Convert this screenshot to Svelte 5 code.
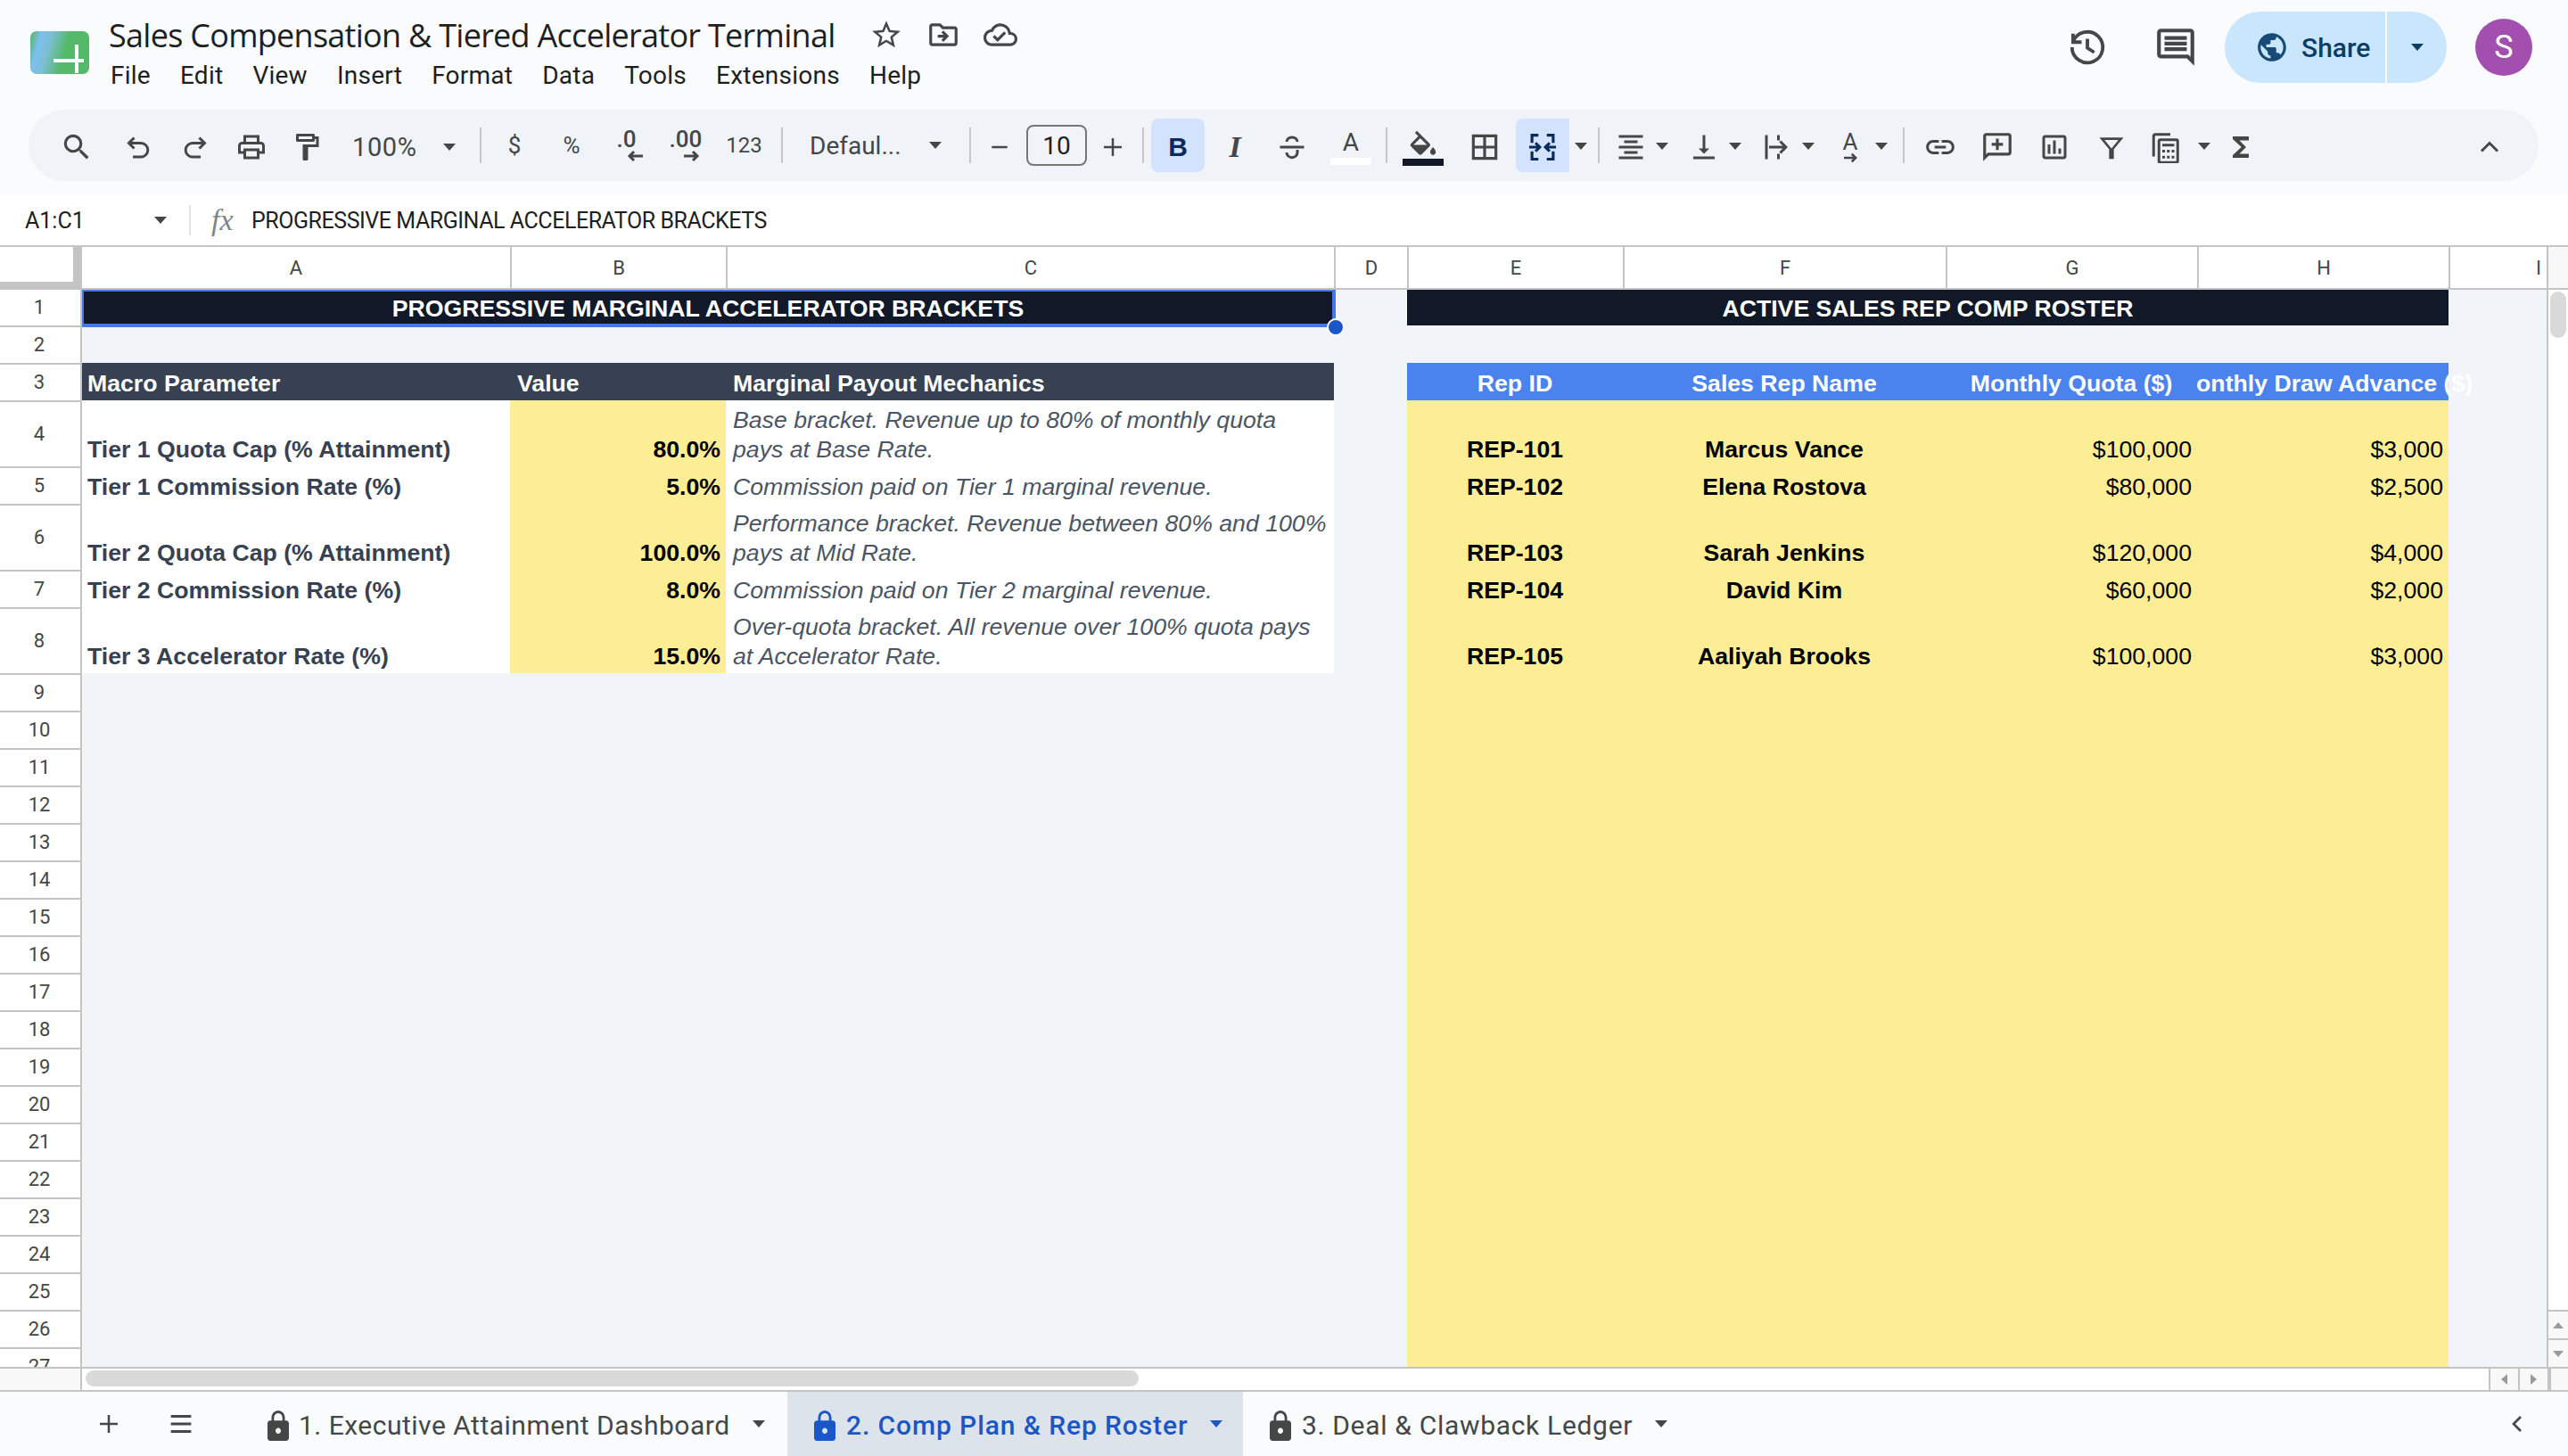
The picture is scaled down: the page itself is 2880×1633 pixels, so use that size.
<script>
  const paths = {
    search: "M15.5 14h-.79l-.28-.27A6.471 6.471 0 0 0 16 9.5 6.5 6.5 0 1 0 9.5 16c1.61 0 3.09-.59 4.23-1.57l.27.28v.79l5 4.99L20.49 19l-4.99-5zm-6 0C7.01 14 5 11.99 5 9.5S7.01 5 9.5 5 14 7.01 14 9.5 11.99 14 9.5 14z",
    print: "M19 8h-1V3H6v5H5c-1.66 0-3 1.34-3 3v6h4v4h12v-4h4v-6c0-1.66-1.34-3-3-3zM8 5h8v3H8V5zm8 14H8v-4h8v4zm2-4v-2H6v2H4v-4c0-.55.45-1 1-1h14c.55 0 1 .45 1 1v4h-2z",
    paint: "M18 4V3c0-.55-.45-1-1-1H5c-.55 0-1 .45-1 1v4c0 .55.45 1 1 1h12c.55 0 1-.45 1-1V6h1v4H9v11c0 .55.45 1 1 1h2c.55 0 1-.45 1-1v-9h8V4h-3zm-2 2H6V4h10v2z",
    fill: "M16.56 8.94L7.62 0 6.21 1.41l2.38 2.38-5.15 5.15c-.59.59-.59 1.54 0 2.12l5.5 5.5c.29.29.68.44 1.06.44s.77-.15 1.06-.44l5.5-5.5c.59-.58.59-1.53 0-2.12zM5.21 10L10 5.21 14.79 10H5.21zM19 11.5s-2 2.17-2 3.5c0 1.1.9 2 2 2s2-.9 2-2c0-1.33-2-3.5-2-3.5z",
    borders: "M3 3v18h18V3H3zm8 16H5v-6h6v6zm0-8H5V5h6v6zm8 8h-6v-6h6v6zm0-8h-6V5h6v6z",
    align: "M3 3h18v2H3zM7 7h10v2H7zM3 11h18v2H3zM7 15h10v2H7zM3 19h18v2H3z",
    valign: "M16 13h-3V3h-2v10H8l4 4 4-4zM4 19v2h16v-2H4z",
    wrap: "M3 3h2v18H3zM12 3h2v4h-2zM12 17h2v4h-2zM6 11h10.2l-2.6-2.6L15 7l5 5-5 5-1.4-1.4 2.6-2.6H6z",
    link: "M3.9 12c0-1.71 1.39-3.1 3.1-3.1h4V7H7c-2.76 0-5 2.24-5 5s2.24 5 5 5h4v-1.9H7c-1.71 0-3.1-1.39-3.1-3.1zM8 13h8v-2H8v2zm9-6h-4v1.9h4c1.71 0 3.1 1.39 3.1 3.1s-1.39 3.1-3.1 3.1h-4V17h4c2.76 0 5-2.24 5-5s-2.24-5-5-5z",
    addComment: "M20 2H4c-1.1 0-2 .9-2 2v18l4-4h14c1.1 0 2-.9 2-2V4c0-1.1-.9-2-2-2zm0 14H5.17L4 17.17V4h16v12zM13 6h-2v3H8v2h3v3h2v-3h3V9h-3z",
    chart: "M19 3H5c-1.1 0-2 .9-2 2v14c0 1.1.9 2 2 2h14c1.1 0 2-.9 2-2V5c0-1.1-.9-2-2-2zm0 16H5V5h14v14zM7 10h2v7H7zM11 7h2v10h-2zM15 13h2v4h-2z",
    sigma: "M18 4H6v2l6.5 6L6 18v2h12v-3h-7l5-5-5-5h7z",
    comment: "M21.99 4c0-1.1-.89-2-1.99-2H4c-1.1 0-2 .9-2 2v12c0 1.1.9 2 2 2h14l4 4-.01-18zM20 4v13.17L18.83 16H4V4h16zM6 12h12v2H6zm0-3h12v2H6zm0-3h12v2H6z",
    globe: "M12 2C6.48 2 2 6.48 2 12s4.48 10 10 10 10-4.48 10-10S17.52 2 12 2zm-1 17.93c-3.95-.49-7-3.85-7-7.93 0-.62.08-1.21.21-1.79L9 15v1c0 1.1.9 2 2 2v1.93zm6.9-2.54c-.26-.81-1-1.39-1.9-1.39h-1v-3c0-.55-.45-1-1-1H8v-2h2c.55 0 1-.45 1-1V7h2c1.1 0 2-.9 2-2v-.41c2.93 1.19 5 4.06 5 7.41 0 2.08-.8 3.97-2.1 5.39z",
    star: "M22 9.24l-7.19-.62L12 2 9.19 8.63 2 9.24l5.46 4.73L5.82 21 12 17.27 18.18 21l-1.63-7.03L22 9.24zM12 15.4l-3.76 2.27 1-4.28-3.32-2.88 4.38-.38L12 6.1l1.71 4.04 4.38.38-3.32 2.88 1 4.28L12 15.4z",
    folder: "M20 6h-8l-2-2H4c-1.1 0-2 .9-2 2v12c0 1.1.9 2 2 2h16c1.1 0 2-.9 2-2V8c0-1.1-.9-2-2-2zm0 12H4V6h5.17l2 2H20v10zM12.16 12H8v2h4.16l-1.59 1.59L12 17l4-4-4-4-1.41 1.41z",
    cloud: "M19.35 10.04A7.49 7.49 0 0 0 12 4C9.11 4 6.6 5.64 5.35 8.04A5.994 5.994 0 0 0 0 14c0 3.31 2.69 6 6 6h13c2.76 0 5-2.24 5-5 0-2.64-2.05-4.78-4.65-4.96zM19 18H6c-2.21 0-4-1.79-4-4 0-2.05 1.53-3.76 3.56-3.97l1.07-.11.5-.95A5.469 5.469 0 0 1 12 6c2.62 0 4.88 1.86 5.39 4.43l.3 1.5 1.53.11A2.98 2.98 0 0 1 22 15c0 1.65-1.35 3-3 3zm-9-3.82l-2.09-2.09L6.5 13.5 10 17l6.01-6.01-1.41-1.41z",
    lock: "M18 8h-1V6c0-2.76-2.24-5-5-5S7 3.24 7 6v2H6c-1.1 0-2 .9-2 2v10c0 1.1.9 2 2 2h12c1.1 0 2-.9 2-2V10c0-1.1-.9-2-2-2zm-6 9c-1.1 0-2-.9-2-2s.9-2 2-2 2 .9 2 2-.9 2-2 2zm3.1-9H8.9V6c0-1.71 1.39-3.1 3.1-3.1 1.71 0 3.1 1.39 3.1 3.1v2z"
  };

  // outline icons that read better as strokes
  const strokes = {
    undo: "M9 5L5 9l4 4M5 9h9a5.2 5.2 0 0 1 0 10.4H8",
    redo: "M15 5l4 4-4 4M19 9h-9a5.2 5.2 0 0 0 0 10.4h6",
    strike: "M3 12h18M16 8a4 3.4 0 0 0-8 0M8 16a4 3.8 0 0 0 8 0V14",
    merge: "M9 3.5H4.5V9M4.5 15v5.5H9M15 3.5h4.5V9M19.5 15v5.5H15M2.5 12h7M7 9l3 3-3 3M21.5 12h-7M17 9l-3 3 3 3",
    filter: "M4 5h16l-7 8.5V21h-2v-7.5z",
    calc: "M3.5 19V4A1.5 1.5 0 0 1 5 2.5h11M8.5 6.5h12a1 1 0 0 1 1 1v15a1 1 0 0 1-1 1h-12a1 1 0 0 1-1-1v-15a1 1 0 0 1 1-1zM10 10.5h9M10 15h2M13.5 15h2M17 15h2M10 19.5h2M13.5 19.5h2M17 19.5h2",
    history: "M3.6 4v5h5M3.6 8.8A9 9 0 1 1 3 12M12 7v5.4l4 2.6",
    up: "M6 15l6-6 6 6",
    left: "M15 6l-6 6 6 6",
    plus: "M12 4v16M4 12h16",
    minus: "M5 12h14",
    menu: "M4 6h16M4 12h16M4 18h16",
    arrowL: "M20 8H6M10 3L5 8l5 5",
    arrowR: "M2 8h14M12 3l5 5-5 5"
  };

  const columns = ["A", "B", "C", "D", "E", "F", "G", "H", "I"];

  const rowHeights = [40, 42, 42, 74, 42, 74, 42, 74, 42];
  for (let i = 10; i <= 27; i++) rowHeights.push(42);

  // rows 4-8 of both tables
  const params = [
    ["Tier 1 Quota Cap (% Attainment)", "80.0%", ["Base bracket. Revenue up to 80% of monthly quota", "pays at Base Rate."]],
    ["Tier 1 Commission Rate (%)", "5.0%", ["Commission paid on Tier 1 marginal revenue."]],
    ["Tier 2 Quota Cap (% Attainment)", "100.0%", ["Performance bracket. Revenue between 80% and 100%", "pays at Mid Rate."]],
    ["Tier 2 Commission Rate (%)", "8.0%", ["Commission paid on Tier 2 marginal revenue."]],
    ["Tier 3 Accelerator Rate (%)", "15.0%", ["Over-quota bracket. All revenue over 100% quota pays", "at Accelerator Rate."]]
  ];
  const reps = [
    ["REP-101", "Marcus Vance", "$100,000", "$3,000"],
    ["REP-102", "Elena Rostova", "$80,000", "$2,500"],
    ["REP-103", "Sarah Jenkins", "$120,000", "$4,000"],
    ["REP-104", "David Kim", "$60,000", "$2,000"],
    ["REP-105", "Aaliyah Brooks", "$100,000", "$3,000"]
  ];
  const menus = ["File", "Edit", "View", "Insert", "Format", "Data", "Tools", "Extensions", "Help"];
  const tabs = [
    { name: "1. Executive Attainment Dashboard", cls: "tab1" },
    { name: "2. Comp Plan & Rep Roster", cls: "tab2 active" },
    { name: "3. Deal & Clawback Ledger", cls: "tab3" }
  ];
  const emptyRows = Array.from({ length: 19 }, (_, i) => i + 9);
</script>

{#snippet icon(name, size = 40)}
  <svg class="ic" width={size} height={size} viewBox="0 0 24 24"><path d={paths[name]} /></svg>
{/snippet}

{#snippet line(name, size = 40)}
  <svg class="ln" width={size} height={size} viewBox="0 0 24 24"><path d={strokes[name]} /></svg>
{/snippet}

<div class="page">
  <header class="top">
    <svg class="logo" width="66" height="48" viewBox="0 0 66 48">
      <defs>
        <linearGradient id="lg" x1="0" x2="1" y1="0.2" y2="0.4">
          <stop offset="0" stop-color="#5ab878" />
          <stop offset="0.15" stop-color="#7dbff0" />
          <stop offset="0.32" stop-color="#7cbfd4" />
          <stop offset="0.62" stop-color="#55b96a" />
        </linearGradient>
      </defs>
      <rect width="66" height="48" rx="7" fill="url(#lg)" />
      <path d="M26 33h34M52 15v32" stroke="#fff" stroke-width="4" fill="none" />
    </svg>
    <div class="docinfo">
      <div class="titlerow">
        <span class="title">Sales Compensation &amp; Tiered Accelerator Terminal</span>
        <span class="titleicons">
          {@render icon("star", 38)}
          {@render icon("folder", 38)}
          {@render icon("cloud", 38)}
        </span>
      </div>
      <nav class="menus">
        {#each menus as m}<span>{m}</span>{/each}
      </nav>
    </div>
    <div class="actions">
      <span class="act">{@render line("history", 46)}</span>
      <span class="act">{@render icon("comment", 50)}</span>
      <div class="share">
        <span class="share-main">
          <svg class="globe" width="38" height="38" viewBox="0 0 24 24"><path d={paths.globe} /></svg>
          Share
        </span>
        <span class="share-more"><i class="caret navy"></i></span>
      </div>
      <span class="avatar">S</span>
    </div>
  </header>

  <div class="toolwrap">
    <div class="toolbar">
      <span class="tool search">{@render icon("search", 38)}</span>
      <span class="tool">{@render line("undo", 36)}</span>
      <span class="tool">{@render line("redo", 36)}</span>
      <span class="tool pt">{@render icon("print", 36)}</span>
      <span class="tool pt">{@render icon("paint", 36)}</span>
      <span class="zoomsel"><span>100%</span><i class="caret"></i></span>
      <i class="sep"></i>
      <span class="tool txt first">$</span>
      <span class="tool txt">%</span>
      <span class="tool dec">
        <span>.0</span>
        <svg width="22" height="16" viewBox="0 0 22 16"><path d={strokes.arrowL} /></svg>
      </span>
      <span class="tool dec">
        <span>.00</span>
        <svg width="22" height="16" viewBox="0 0 22 16"><path d={strokes.arrowR} /></svg>
      </span>
      <span class="tool txt small">123</span>
      <i class="sep s2"></i>
      <span class="fontsel"><span>Defaul...</span><i class="caret"></i></span>
      <i class="sep"></i>
      <span class="tool minus">{@render line("minus", 30)}</span>
      <span class="sizebox">10</span>
      <span class="tool plus">{@render line("plus", 30)}</span>
      <i class="sep s3"></i>
      <span class="tool on bold">B</span>
      <span class="tool italic">I</span>
      <span class="tool">{@render line("strike", 36)}</span>
      <span class="tool color first-color">
        <span>A</span>
        <i class="swatch white"></i>
      </span>
      <i class="sep s4"></i>
      <span class="tool color fillc">
        <svg class="ic" width="38" height="34" viewBox="0 0 24 18"><path d={paths.fill} /></svg>
        <i class="swatch dark"></i>
      </span>
      <span class="tool borders">{@render icon("borders", 38)}</span>
      <span class="tool on mergebtn">
        <svg class="ln navy" width="38" height="38" viewBox="0 0 24 24"><path d={strokes.merge} /></svg>
      </span>
      <span class="cslot"><i class="caret"></i></span>
      <i class="sep s5"></i>
      <span class="split"><span class="sp-ic">{@render icon("align", 36)}</span><i class="caret"></i></span>
      <span class="split"><span class="sp-ic">{@render icon("valign", 36)}</span><i class="caret"></i></span>
      <span class="split"><span class="sp-ic">{@render icon("wrap", 36)}</span><i class="caret"></i></span>
      <span class="split">
        <span class="sp-ic rotate">
          <span>A</span>
          <svg width="28" height="14" viewBox="0 0 20 16"><path d={strokes.arrowR} /></svg>
        </span>
        <i class="caret"></i>
      </span>
      <i class="sep s6"></i>
      <span class="tool">{@render icon("link", 38)}</span>
      <span class="tool">{@render icon("addComment", 38)}</span>
      <span class="tool">{@render icon("chart", 36)}</span>
      <span class="tool">{@render line("filter", 32)}</span>
      <span class="tool calc">{@render line("calc", 36)}</span>
      <span class="cslot c2"><i class="caret"></i></span>
      <span class="tool sigma">{@render icon("sigma", 36)}</span>
      <span class="tool collapse">{@render line("up", 36)}</span>
    </div>
  </div>

  <div class="formula">
    <span class="nameref">A1:C1</span>
    <i class="caret"></i>
    <i class="fsep"></i>
    <span class="fx">fx</span>
    <span class="ftext">PROGRESSIVE MARGINAL ACCELERATOR BRACKETS</span>
  </div>

  <main class="sheetarea">
    <div class="sheet" style="grid-template-rows: 48px {rowHeights.map((h) => h + 'px').join(' ')};">
      <div class="corner"></div>
      {#each columns as c}
        <div class="colhead" class:last={c === "I"}>{c}</div>
      {/each}

      <!-- row labels sit in the first grid column -->
      {#each rowHeights as _, i}
        <div class="rowhead" class:firstrow={i === 0} style="grid-row: {i + 2};">{i + 1}</div>
      {/each}

      <div class="cell banner" style="grid-row: 2; grid-column: 2 / 5;">PROGRESSIVE MARGINAL ACCELERATOR BRACKETS</div>
      <div class="cell banner" style="grid-row: 2; grid-column: 6 / 10;">ACTIVE SALES REP COMP ROSTER</div>

      <div class="cell hd" style="grid-row: 4; grid-column: 2;">Macro Parameter</div>
      <div class="cell hd pl" style="grid-row: 4; grid-column: 3;">Value</div>
      <div class="cell hd pl" style="grid-row: 4; grid-column: 4;">Marginal Payout Mechanics</div>
      <div class="cell hdb center" style="grid-row: 4; grid-column: 6;">Rep ID</div>
      <div class="cell hdb center" style="grid-row: 4; grid-column: 7;">Sales Rep Name</div>
      <div class="cell hdb center" style="grid-row: 4; grid-column: 8;">Monthly Quota ($)</div>
      <div class="cell hdb center spill" style="grid-row: 4; grid-column: 9;">Monthly Draw Advance ($)</div>

      {#each params as p, i}
        <div class="cell label" style="grid-row: {i + 5}; grid-column: 2;">{p[0]}</div>
        <div class="cell value" style="grid-row: {i + 5}; grid-column: 3;">{p[1]}</div>
        <div class="cell note pl" style="grid-row: {i + 5}; grid-column: 4;">
          {#each p[2] as t}<span>{t}</span>{/each}
        </div>
      {/each}

      {#each reps as r, i}
        <div class="cell yellow b center" style="grid-row: {i + 5}; grid-column: 6;">{r[0]}</div>
        <div class="cell yellow b center" style="grid-row: {i + 5}; grid-column: 7;">{r[1]}</div>
        <div class="cell yellow right" style="grid-row: {i + 5}; grid-column: 8;">{r[2]}</div>
        <div class="cell yellow right" style="grid-row: {i + 5}; grid-column: 9;">{r[3]}</div>
      {/each}

      {#each emptyRows as r}
        <div class="cell yellow" style="grid-row: {r + 1}; grid-column: 6 / 10;"></div>
      {/each}

      <div class="selection"><i class="handle"></i></div>
    </div>

    <aside class="vscroll">
      <div class="vcorner"></div>
      <div class="vthumb"></div>
      <div class="vbtns">
        <span class="vbtn"><i class="tri up"></i></span>
        <span class="vbtn"><i class="tri down"></i></span>
      </div>
    </aside>
  </main>

  <div class="hscroll">
    <div class="hgutter"></div>
    <div class="htrack"><div class="hthumb"></div></div>
    <span class="hbtn"><i class="tri lf"></i></span>
    <span class="hbtn"><i class="tri rt"></i></span>
    <div class="hend"></div>
  </div>

  <footer class="tabbar">
    <span class="tb-ic add">{@render line("plus", 30)}</span>
    <span class="tb-ic">{@render line("menu", 34)}</span>
    {#each tabs as t}
      <div class="tab {t.cls}">
        <svg class="lock" width="24" height="34" viewBox="4 1 16 21" preserveAspectRatio="none"><path d={paths.lock} /></svg>
        <span class="tabname">{t.name}</span>
        <i class="caret"></i>
      </div>
    {/each}
    <span class="tb-ic chevron">{@render line("left", 32)}</span>
  </footer>
</div>

<style>
  :global(body) {
    margin: 0;
    background: #f9fbfd;
  }

  .page {
    width: 2880px;
    height: 1633px;
    display: flex;
    flex-direction: column;
    overflow: hidden;
    font-family: Roboto, "Liberation Sans", sans-serif;
    color: #1f1f1f;
  }

  .ic { fill: #444746; display: block; }
  .ln { fill: none; stroke: #444746; stroke-width: 2; display: block; }
  .ln.navy { stroke: #0b2a5c; }

  .caret {
    display: block;
    width: 0;
    height: 0;
    border-left: 7px solid transparent;
    border-right: 7px solid transparent;
    border-top: 8px solid #444746;
    flex: none;
  }
  .caret.navy { border-top-color: #0b3d67; }

  /* title area */
  .top {
    height: 123px;
    display: flex;
    align-items: flex-start;
    flex: none;
  }
  .logo { margin: 35px 0 0 34px; flex: none; }
  .docinfo { margin-left: 22px; padding-top: 17px; }
  .titlerow { display: flex; align-items: center; height: 44px; }
  .title { font-size: 36px; font-family: "Open Sans", Roboto, sans-serif; letter-spacing: -0.72px; white-space: nowrap; }
  .titleicons { display: flex; gap: 26px; margin-left: 38px; }
  .menus { display: flex; gap: 33px; font-size: 28px; letter-spacing: 0.25px; height: 38px; line-height: 38px; margin-top: 5px; padding-left: 2px; }

  .actions {
    margin-left: auto;
    padding: 13px 40px 0 0;
    display: flex;
    align-items: center;
    height: 80px;
  }
  .act { width: 50px; height: 50px; margin-right: 49px; display: flex; align-items: center; justify-content: center; }
  .act:nth-child(2) { margin-right: 30px; }
  .share { display: flex; width: 249px; height: 80px; border-radius: 40px; background: #c9e6fc; color: #0b3d67; }
  .share-main {
    width: 182px;
    display: flex;
    align-items: center;
    gap: 14px;
    padding-left: 34px;
    font-size: 30px;
    font-weight: 500;
    box-sizing: border-box;
    border-right: 2px solid #f9fbfd;
  }
  .globe { fill: #174a75; }
  .share-more { flex: 1; display: flex; align-items: center; justify-content: center; }
  .avatar {
    width: 64px;
    height: 64px;
    margin-left: 32px;
    border-radius: 50%;
    background: #a24fb0;
    color: #fff;
    font-size: 36px;
    display: flex;
    align-items: center;
    justify-content: center;
  }

  /* toolbar */
  .toolwrap { padding: 0 33px 16px 32px; flex: none; }
  .toolbar {
    height: 80px;
    border-radius: 40px;
    background: #f0f4f9;
    display: flex;
    align-items: center;
    padding: 0 23px 0 22px;
    color: #444746;
  }
  .tool {
    width: 64px;
    height: 60px;
    flex: none;
    display: flex;
    align-items: center;
    justify-content: center;
    box-sizing: border-box;
  }
  .tool > svg, .sp-ic > svg { margin-top: 3px; }
  .tool.search { margin-right: 5px; }
  .tool.pt { width: 62px; }
  .zoomsel {
    width: 163px;
    flex: none;
    display: flex;
    align-items: center;
    padding: 3px 0 0 20px;
    box-sizing: border-box;
    gap: 29px;
    font-size: 29px;
    letter-spacing: 0.6px;
  }
  .sep { width: 2px; height: 40px; background: #c7c7c7; flex: none; }
  .sep.s2 { margin-left: 11px; }
  .sep.s3 { margin-left: 4px; margin-right: 8px; }
  .sep.s4 { margin-left: 7px; margin-right: 8px; }
  .sep.s5 { margin-left: 7px; margin-right: 4px; }
  .sep.s6 { margin-left: 8px; margin-right: 8px; }
  .txt { font-size: 26px; }
  .txt.first { margin-left: 5px; }
  .txt.small { font-size: 24px; padding-left: 3px; }
  .dec { flex-direction: column; font-size: 26px; font-weight: 500; line-height: 24px; }
  .dec span { margin-left: -5px; }
  .dec + .dec span { margin-left: 0; }
  .dec svg { fill: none; stroke: #444746; stroke-width: 3; margin: -1px 0 0 14px; }
  .fontsel {
    width: 209px;
    flex: none;
    display: flex;
    align-items: center;
    padding-left: 30px;
    box-sizing: border-box;
    gap: 31px;
    font-size: 28px;
  }
  .tool.minus { width: 60px; padding-left: 3px; }
  .sizebox {
    width: 68px;
    height: 46px;
    margin-left: 2px;
    box-sizing: border-box;
    border: 2px solid #747775;
    border-radius: 8px;
    display: flex;
    align-items: center;
    justify-content: center;
    font-size: 28px;
    flex: none;
    color: #1f1f1f;
  }
  .tool.plus { width: 58px; }
  .tool.on { background: #d3e3fd; width: 60px; border-radius: 8px; }
  .bold { font-family: "Liberation Sans", sans-serif; font-weight: 700; font-size: 30px; color: #0b2a5c; padding-top: 3px; }
  .tool.italic { margin-left: 2px; padding-top: 3px; font-family: "Liberation Serif", serif; font-style: italic; font-weight: 700; font-size: 34px; }
  .color { flex-direction: column; font-size: 28px; line-height: 30px; padding-top: 4px; }
  .first-color { margin-left: 2px; }
  .fillc { padding-top: 0; }
  .swatch { display: block; width: 46px; height: 8px; margin-top: 2px; }
  .swatch.white { background: #fff; }
  .swatch.dark { background: #111827; margin-top: 0; }
  .tool.borders { margin-left: 5px; }
  .tool.mergebtn { margin-left: 3px; border-radius: 8px 0 0 8px; }
  .cslot { width: 25px; flex: none; display: flex; justify-content: center; padding-top: 2px; }
  .cslot.c2 { width: 23px; }
  .split { width: 82px; flex: none; display: flex; align-items: center; }
  .sp-ic { width: 62px; display: flex; justify-content: center; }
  .split .caret { margin-left: -3px; margin-top: 2px; }
  .rotate { flex-direction: column; align-items: center; font-size: 26px; line-height: 26px; padding-top: 3px; }
  .rotate svg { fill: none; stroke: #444746; stroke-width: 3; margin-top: -2px; }
  .tool.calc { width: 60px; padding-right: 5px; }
  .tool.sigma { margin-left: -2px; }
  .tool.collapse { margin-left: auto; }

  /* formula bar */
  .formula {
    height: 56px;
    flex: none;
    background: #fff;
    display: flex;
    align-items: center;
    box-sizing: border-box;
    font-size: 25px;
  }
  .nameref { width: 173px; padding-left: 28px; box-sizing: border-box; }
  .fsep { width: 2px; height: 34px; background: #e1e3e1; margin-left: 25px; }
  .fx { font-family: "Liberation Serif", serif; font-style: italic; font-size: 34px; color: #80868b; margin-left: 23px; width: 45px; }
  .ftext { letter-spacing: -0.46px; }

  /* grid */
  .sheetarea {
    height: 1258px;
    flex: none;
    display: flex;
    border-top: 2px solid #c4c4c4;
    box-sizing: border-box;
    overflow: hidden;
    background: #f1f4f9;
  }
  .sheet {
    position: relative;
    width: 2856px;
    height: 1256px;
    flex: none;
    display: grid;
    grid-template-columns: 92px 480px 242px 682px 82px 242px 362px 282px 282px 110px;
    align-content: start;
    font-family: "Liberation Sans", Arial, sans-serif;
    font-size: 26.67px;
    overflow: hidden;
  }
  .corner {
    box-sizing: border-box;
    background: #fff;
    border-right: 10px solid #c4c4c4;
    border-bottom: 9px solid #c4c4c4;
    grid-row: 1;
    grid-column: 1;
    z-index: 2;
  }
  .colhead {
    box-sizing: border-box;
    background: #fff;
    border-bottom: 2px solid #c4c4c4;
    border-left: 2px solid #c4c4c4;
    color: #444746;
    font-family: Roboto, sans-serif;
    font-size: 22px;
    display: flex;
    align-items: center;
    justify-content: center;
  }
  .colhead:nth-child(2) { border-left: 0; }
  .colhead.last { justify-content: flex-end; padding-right: 6px; }
  .rowhead {
    grid-column: 1;
    box-sizing: border-box;
    background: #fff;
    border-top: 2px solid #c4c4c4;
    border-right: 2px solid #c4c4c4;
    color: #444746;
    font-family: Roboto, sans-serif;
    font-size: 22px;
    display: flex;
    align-items: center;
    justify-content: center;
    padding: 0 2px 2px 0;
  }
  .rowhead.firstrow { border-top: 0; }

  .cell {
    display: flex;
    align-items: flex-end;
    box-sizing: border-box;
    padding: 0 6px 2px;
    white-space: nowrap;
    min-width: 0;
    line-height: 33px;
  }
  .cell.pl { padding-left: 8px; }
  .banner { background: #111827; color: #fff; font-weight: 700; align-items: center; justify-content: center; padding-top: 2px; padding-bottom: 0; }
  .hd { background: #374151; color: #fff; font-weight: 700; }
  .hdb { background: #4a82ee; color: #fff; font-weight: 700; }
  .center { justify-content: center; }
  .right { justify-content: flex-end; }
  .spill { clip-path: inset(0 -100px 0 0); padding-left: 8px; padding-right: 4px; }
  .label { background: #fff; color: #374151; font-weight: 700; }
  .value { background: #fdee96; color: #000; font-weight: 700; justify-content: flex-end; }
  .note { background: #fff; color: #4b5563; font-style: italic; flex-direction: column; align-items: flex-start; justify-content: flex-end; }
  .yellow { background: #fdee96; color: #000; }
  .b { font-weight: 700; }

  .selection {
    position: absolute;
    left: 92px;
    top: 48px;
    width: 1406px;
    height: 42px;
    box-sizing: border-box;
    border: solid #4478e2;
    border-width: 2px 4px 4px 2px;
    pointer-events: none;
  }
  .handle {
    position: absolute;
    right: -14px;
    bottom: -14px;
    width: 16px;
    height: 16px;
    border-radius: 50%;
    background: #1a56c8;
    border: 2px solid #fff;
  }

  /* scrollbars */
  .vscroll {
    flex: 1;
    background: #fff;
    border-left: 2px solid #c4c4c4;
    display: flex;
    flex-direction: column;
    align-items: center;
  }
  .vcorner { height: 46px; width: 100%; background: #f8f8f8; border-bottom: 2px solid #c4c4c4; flex: none; }
  .vthumb { width: 18px; height: 52px; margin-top: 2px; border-radius: 9px; background: #d9d9d9; flex: none; }
  .vbtns { margin-top: auto; width: 100%; }
  .vbtn { height: 30px; display: flex; align-items: center; justify-content: center; background: #f8f8f8; border-top: 2px solid #c4c4c4; }
  .tri { display: block; width: 0; height: 0; }
  .tri.up { border-left: 6px solid transparent; border-right: 6px solid transparent; border-bottom: 7px solid #9a9a9a; }
  .tri.down { border-left: 6px solid transparent; border-right: 6px solid transparent; border-top: 7px solid #9a9a9a; }
  .tri.lf { border-top: 6px solid transparent; border-bottom: 6px solid transparent; border-right: 7px solid #9a9a9a; }
  .tri.rt { border-top: 6px solid transparent; border-bottom: 6px solid transparent; border-left: 7px solid #9a9a9a; }

  .hscroll {
    height: 28px;
    flex: none;
    display: flex;
    background: #fff;
    box-sizing: border-box;
    border-top: 2px solid #c4c4c4;
    border-bottom: 2px solid #c4c4c4;
  }
  .hgutter { width: 92px; background: #f8f8f8; border-right: 2px solid #c4c4c4; box-sizing: border-box; flex: none; }
  .htrack { flex: 1; padding: 2px 0 0 4px; }
  .hthumb { width: 1181px; height: 18px; border-radius: 9px; background: #d9d9d9; }
  .hbtn { width: 31px; flex: none; display: flex; align-items: center; justify-content: center; background: #f8f8f8; border-left: 2px solid #c4c4c4; }
  .hend { width: 23px; flex: none; background: #f8f8f8; border-left: 4px solid #c4c4c4; box-sizing: border-box; }

  /* sheet tabs */
  .tabbar {
    flex: 1;
    display: flex;
    align-items: stretch;
    background: #f9fbfd;
    color: #444746;
    padding-left: 102px;
  }
  .tb-ic { width: 40px; display: flex; align-items: center; justify-content: center; flex: none; }
  .tb-ic.add { margin-right: 41px; }
  .tab {
    display: flex;
    align-items: center;
    box-sizing: border-box;
    font-size: 30px;
    font-weight: 400;
    letter-spacing: 0.5px;
    flex: none;
  }
  .lock { fill: #444746; flex: none; margin-top: 4px; }
  .tab1 .tabname { margin-left: 11px; }
  .tab1 { width: 660px; padding-left: 77px; }
  .tab2 { width: 511px; padding-left: 30px; letter-spacing: 0.9px; }
  .tab3 { width: 500px; padding-left: 30px; letter-spacing: 0.68px; }
  .tab.active { background: #dde3ea; color: #1a56c8; font-weight: 500; }
  .tab.active .lock { fill: #1a56c8; }
  .tab.active .caret { border-top-color: #1a56c8; }
  .tabname { margin: 2px 25px 0 12px; white-space: nowrap; }
  .chevron { margin-left: auto; margin-right: 37px; }
</style>
